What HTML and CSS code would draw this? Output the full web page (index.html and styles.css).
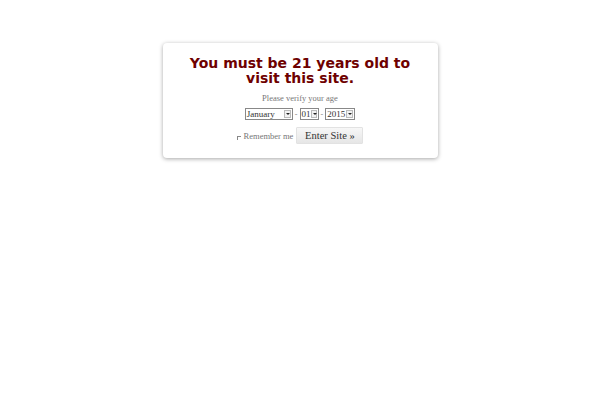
FILE: index.html
```html
<!DOCTYPE html>
<html>
<head>
<meta charset="utf-8">
<link rel="stylesheet" href="styles.css">
</head>
<body>
<div class="overlay">
  <div class="box">
    <h1 class="title">You must be 21 years old to visit this site.</h1>
    <p class="sub">Please verify your age</p>
    <div class="dates">
      <span class="sel sel-month"><span class="val">January</span><span class="arrow"></span></span>
      <span class="dash">-</span>
      <span class="sel sel-day"><span class="val">01</span><span class="arrow"></span></span>
      <span class="dash">-</span>
      <span class="sel sel-year"><span class="val">2015</span><span class="arrow"></span></span>
    </div>
    <div class="submit-row">
      <label class="remember"><span class="check"></span>Remember me</label>
      <button class="enter">Enter Site &raquo;</button>
    </div>
  </div>
</div>
</body>
</html>
```
FILE: styles.css
```css
html, body {
  margin: 0;
  padding: 0;
  background: #fff;
}
body {
  width: 600px;
  height: 400px;
  font-family: "Liberation Serif", "Times New Roman", serif;
}
.overlay {
  display: flex;
  justify-content: center;
  padding-top: 43px;
}
.box {
  width: 275px;
  box-sizing: border-box;
  height: 115px;
  background: #fff;
  border-radius: 4px;
  box-shadow: 0 1px 4px rgba(0,0,0,0.35);
  text-align: center;
  padding-top: 13px;
}
.title {
  margin: 0;
  font-family: "DejaVu Sans", sans-serif;
  font-weight: bold;
  font-size: 14px;
  line-height: 14.5px;
  color: #6e0000;
  padding: 0 10px;
}
.sub {
  margin: 8px 0 0;
  font-size: 8.5px;
  line-height: 10px;
  color: #777;
}
.dates {
  margin-top: 5px;
  display: flex;
  justify-content: center;
  align-items: center;
  gap: 2px;
  height: 12px;
}
.dash {
  font-size: 8px;
  color: #888;
}
.sel {
  display: flex;
  align-items: center;
  height: 12px;
  border: 1px solid #888;
  box-sizing: border-box;
  font-size: 9px;
  color: #333;
  background: #fff;
  justify-content: space-between;
  padding-left: 1px;
  padding-right: 1px;
}
.sel-month { width: 48px; }
.sel-day { width: 19px; }
.sel-year { width: 30px; }
.val { line-height: 10px; }
.arrow {
  width: 7px;
  height: 8px;
  box-sizing: border-box;
  border: 1px solid #bbb;
  background: #f2f2f2;
  position: relative;
}
.arrow::after {
  content: "";
  position: absolute;
  left: 1px;
  top: 2px;
  border-left: 2px solid transparent;
  border-right: 2px solid transparent;
  border-top: 2px solid #222;
}
.submit-row {
  margin-top: 7px;
  display: flex;
  justify-content: center;
  align-items: center;
  gap: 3px;
}
.remember {
  display: flex;
  align-items: center;
  font-size: 8.5px;
  color: #777;
}
.check {
  width: 3px;
  height: 3px;
  border-left: 1px solid #888;
  border-top: 1px solid #888;
  margin-right: 3px;
  margin-top: 4px;
}
.enter {
  width: 67px;
  height: 17px;
  padding: 0;
  border: 1px solid #e2e2e2;
  border-radius: 1px;
  background: linear-gradient(#f7f7f7, #e6e6e6);
  font-family: "Liberation Serif", "Times New Roman", serif;
  font-size: 10.5px;
  color: #333;
}
```
